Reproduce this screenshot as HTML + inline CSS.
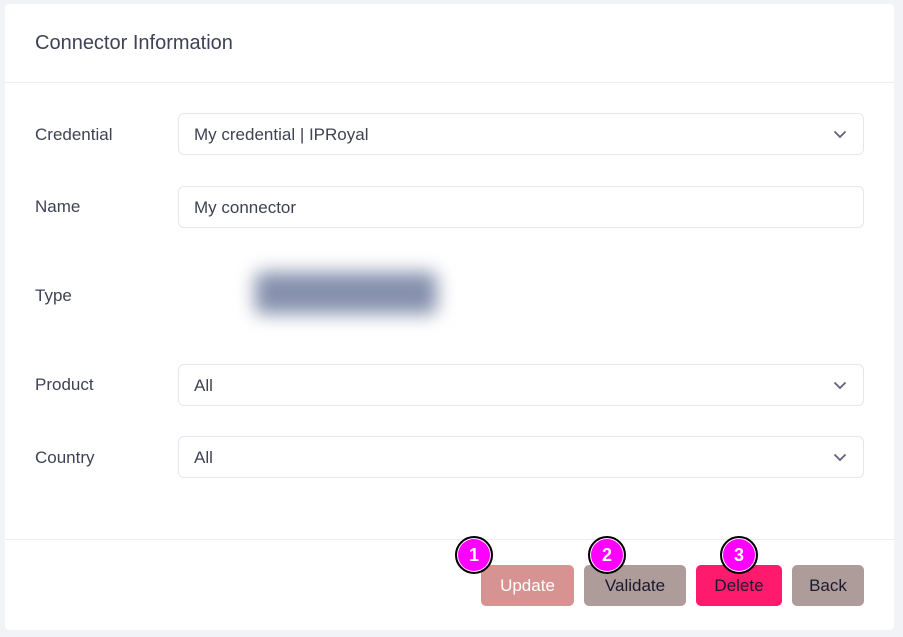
<!DOCTYPE html>
<html><head><style>
*{box-sizing:border-box;margin:0;padding:0}
body{width:903px;height:637px;background:#f2f3f6;font-family:"Liberation Sans",sans-serif;position:relative;overflow:hidden;color:#3f4254}
.card{position:absolute;left:5px;top:4px;width:889px;height:626px;background:#fff;border-radius:4px}
.h{position:absolute;left:30px;top:28px;font-size:20px;color:#3f4254}
.line{position:absolute;left:0;width:889px;height:1px;background:#ebedf3}
.lbl{position:absolute;left:30px;font-size:17px;color:#3f4254}
.inp{position:absolute;left:173px;width:686px;height:42px;border:1px solid #e4e6ef;border-radius:6px;font-size:17px;padding:11px 15px;color:#3f4254}
.chev{position:absolute;right:16px;top:16px}
.btn{position:absolute;top:565px;height:41px;border-radius:5px;font-size:17px;text-align:center;line-height:41px}
.badge{position:absolute;top:536px;width:38px;height:38px;border-radius:50%;background:#f0f;border:2px solid #000;box-shadow:0 0 0 1px #fff inset;color:#fff;font-weight:bold;font-size:18px;text-align:center;line-height:34px}
</style></head><body>
<div class="card">
<div class="h">Connector Information</div>
<div class="line" style="top:78px"></div>
<div class="lbl" style="top:121px">Credential</div>
<div class="inp" style="top:109px">My credential | IPRoyal<svg class="chev" width="14" height="9" viewBox="0 0 14 9"><path d="M1.5 1.5 7 7l5.5-5.5" stroke="#5e6278" stroke-width="1.8" fill="none"/></svg></div>
<div class="lbl" style="top:193px">Name</div>
<div class="inp" style="top:182px">My connector</div>
<div class="lbl" style="top:282px">Type</div>
<div style="position:absolute;left:250px;top:268px;width:182px;height:42px;background:#8590ad;filter:blur(9px);border-radius:6px"></div>
<div class="lbl" style="top:371px">Product</div>
<div class="inp" style="top:360px">All<svg class="chev" width="14" height="9" viewBox="0 0 14 9"><path d="M1.5 1.5 7 7l5.5-5.5" stroke="#5e6278" stroke-width="1.8" fill="none"/></svg></div>
<div class="lbl" style="top:444px">Country</div>
<div class="inp" style="top:432px">All<svg class="chev" width="14" height="9" viewBox="0 0 14 9"><path d="M1.5 1.5 7 7l5.5-5.5" stroke="#5e6278" stroke-width="1.8" fill="none"/></svg></div>
<div class="line" style="top:535px"></div>
</div>
<div class="btn" style="left:481px;width:93px;background:#d79392;color:#fff">Update</div>
<div class="btn" style="left:584px;width:102px;background:#ae9c9b;color:#1a1a2e">Validate</div>
<div class="btn" style="left:696px;width:86px;background:#fe1a6d;color:#1a1a2e">Delete</div>
<div class="btn" style="left:792px;width:72px;background:#ae9c9b;color:#1a1a2e">Back</div>
<div class="badge" style="left:455px">1</div>
<div class="badge" style="left:588px">2</div>
<div class="badge" style="left:720px">3</div>
</body></html>
